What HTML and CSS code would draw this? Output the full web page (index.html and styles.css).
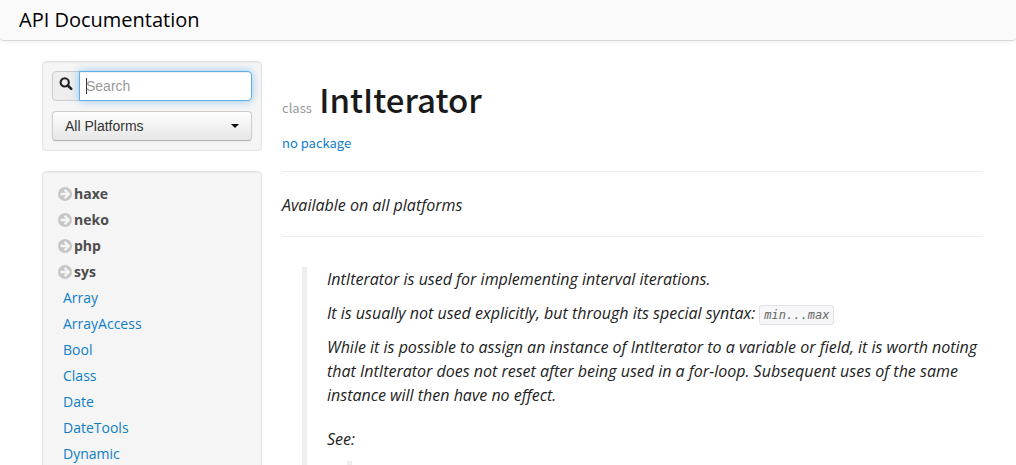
FILE: index.html
```html
<!DOCTYPE html>
<html lang="en">
<head>
<meta charset="utf-8">
<title>IntIterator - API Documentation</title>
<link rel="stylesheet" href="styles.css">
</head>
<body>
<svg class="sprite" aria-hidden="true">
  <symbol id="arrow" viewBox="0 0 14 14">
    <circle cx="7" cy="7" r="7" fill="#c6c6c6"/>
    <path d="M2.5 7H10.5M6.6 2.8L10.8 7L6.6 11.2" fill="none" stroke="#f5f5f5" stroke-width="2.3"/>
  </symbol>
</svg>
<header class="navbar"><a class="brand" href="#">API Documentation</a></header>
<div class="container">
  <aside class="sidebar">
    <form class="well filters">
      <div class="search">
        <label class="addon" for="search" aria-label="Search">
          <svg class="icon-search" viewBox="0 0 14 14"><circle cx="5.7" cy="5.4" r="4.1" fill="none" stroke="#222" stroke-width="2.1"/><path d="M8.7 8.4L12.2 11.9" stroke="#222" stroke-width="2.6" stroke-linecap="round"/></svg>
        </label>
        <input class="search-input" id="search" type="text" placeholder="Search">
      </div>
      <div class="platform">
        <select class="platform-select" aria-label="Platform"><option>All Platforms</option></select>
        <svg class="caret" viewBox="0 0 8 4"><path d="M0 0H8L4 4Z"/></svg>
      </div>
    </form>
    <nav class="well">
      <ul class="nav-list">
        <li><a class="pack" href="#"><svg class="icon"><use href="#arrow"/></svg>haxe</a></li>
        <li><a class="pack" href="#"><svg class="icon"><use href="#arrow"/></svg>neko</a></li>
        <li><a class="pack" href="#"><svg class="icon"><use href="#arrow"/></svg>php</a></li>
        <li><a class="pack" href="#"><svg class="icon"><use href="#arrow"/></svg>sys</a></li>
        <li><a class="type" href="#">Array</a></li>
        <li><a class="type" href="#">ArrayAccess</a></li>
        <li><a class="type" href="#">Bool</a></li>
        <li><a class="type" href="#">Class</a></li>
        <li><a class="type" href="#">Date</a></li>
        <li><a class="type" href="#">DateTools</a></li>
        <li><a class="type" href="#">Dynamic</a></li>
      </ul>
    </nav>
  </aside>
  <main class="content">
    <div class="page-header">
      <h1 class="title"><small class="kind">class</small> IntIterator</h1>
      <a class="package" href="#">no package</a>
    </div>
    <p class="availability">Available on all platforms</p>
    <blockquote class="doc">
      <p>IntIterator is used for implementing interval iterations.</p>
      <p>It is usually not used explicitly, but through its special syntax: <code class="code">min...max</code></p>
      <p>While it is possible to assign an instance of IntIterator to a variable or field, it is worth noting that IntIterator does not reset after being used in a for-loop. Subsequent uses of the same instance will then have no effect.</p>
      <p class="see">See:</p>
      <blockquote class="doc nested"></blockquote>
    </blockquote>
  </main>
</div>
</body>
</html>
```
FILE: styles.css
```css
* { box-sizing: border-box; }
html { height: 100%; overflow: hidden; }
body {
  height: 100%;
  margin: 0;
  overflow: hidden;
  background: #fff;
  color: #222;
  font: 14px/20px "Open Sans", sans-serif;
}
a { color: #0f7dc7; text-decoration: none; }
.sprite { display: none; }
.navbar {
  height: 41px;
  padding: 0 19px;
  background: #fafafa;
  border-bottom: 1px solid #d8d8d8;
  border-radius: 0 0 4px 4px;
  box-shadow: 0 1px 4px rgba(0, 0, 0, 0.07);
}
.brand { color: #000; font-size: 20px; line-height: 40px; }
.container {
  display: flex;
  gap: 20px;
  padding: 20px 34px 0 42px;
}
.sidebar { flex: 0 0 220px; min-width: 0; }
.well {
  margin-bottom: 20px;
  padding: 9px;
  background: #f5f5f5;
  border: 1px solid #e3e3e3;
  border-radius: 4px;
  box-shadow: inset 0 1px 1px rgba(0, 0, 0, 0.05);
}
.search { display: flex; margin-bottom: 10px; }
.addon {
  flex: 0 0 28px;
  height: 30px;
  padding: 5px 6px;
  background: #eee;
  border: 1px solid #ccc;
  border-radius: 4px 0 0 4px;
}
.icon-search { display: block; width: 14px; height: 14px; }
.search-input {
  flex: 1;
  min-width: 0;
  height: 30px;
  margin-left: -1px;
  padding: 4px 6px;
  background: linear-gradient(#333, #333) 6px 6px / 1px 16px no-repeat #fff;
  border: 1px solid #5faee8;
  border-radius: 0 4px 4px 0;
  box-shadow: inset 0 1px 1px rgba(0, 0, 0, 0.07), 0 0 8px rgba(82, 168, 236, 0.6);
  color: #555;
  font: 14px/20px "Liberation Sans", sans-serif;
}
.search-input::placeholder { color: #999; }
.platform { position: relative; }
.platform-select {
  display: block;
  width: 100%;
  height: 30px;
  padding: 0 12px;
  appearance: none;
  background: linear-gradient(#fff, #e6e6e6);
  border: 1px solid #ccc;
  border-bottom-color: #b3b3b3;
  border-radius: 4px;
  box-shadow: 0 1px 2px rgba(0, 0, 0, 0.05);
  color: #333;
  font: 14px/20px "Liberation Sans", sans-serif;
}
.caret {
  position: absolute;
  top: 13px;
  right: 13px;
  width: 8px;
  height: 4px;
  pointer-events: none;
}
.nav-list { margin: 0; padding: 0; list-style: none; }
.nav-list a { display: flex; align-items: center; height: 26px; }
.pack { gap: 2px; padding-left: 6px; color: #4d4d4d; font-weight: 700; }
.type { padding-left: 11px; }
.icon { width: 14px; height: 14px; }
.content { flex: 1; min-width: 0; font-size: 16px; line-height: 24px; }
.page-header { padding: 18px 0; border-bottom: 1px solid #eee; }
.title {
  margin: 0 0 5px;
  color: #1a1a1a;
  font: 500 33px/40px "Noto Sans CJK SC", sans-serif;
}
.kind { color: #999; font-size: 13px; font-weight: 400; }
.package { display: block; font: 13px/20px "Noto Sans CJK SC", sans-serif; }
.availability {
  margin: 0;
  padding: 21px 0 19px;
  border-bottom: 1px solid #eee;
  font-style: italic;
}
.doc {
  margin: 30px 0 0 20px;
  padding-left: 20px;
  border-left: 5px solid #eee;
  font-style: italic;
}
.doc p { margin: 0 0 10px; }
.doc .see { margin-top: 20px; }
.nested { height: 100px; margin-top: 10px; }
.code {
  padding: 2px 4px;
  background: #f7f7f9;
  border: 1px solid #e1e1e8;
  border-radius: 3px;
  color: #666;
  font: italic 12px/16px "DejaVu Sans Mono", monospace;
}
```
